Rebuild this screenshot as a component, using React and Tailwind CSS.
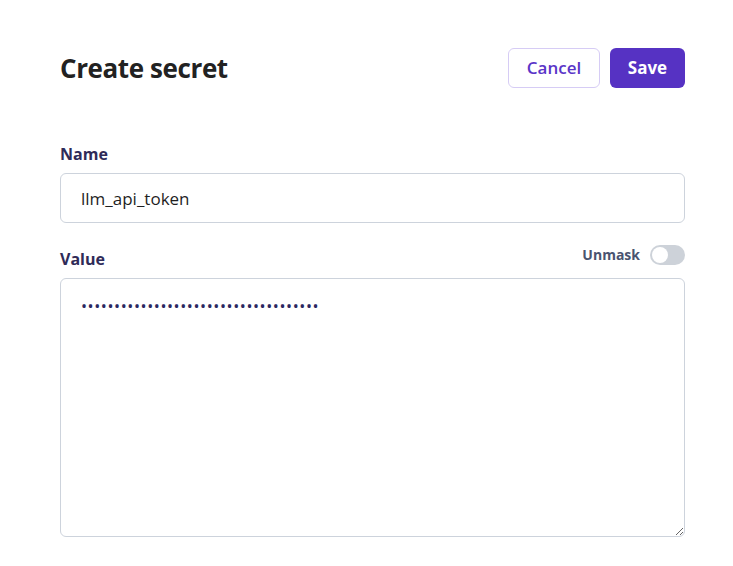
import {useState} from "react";

export default function App() {
    const [unmask, setUnmask] = useState(false);
    const secret = "•".repeat(36);

    return <div className="w-[733px] h-[566px] bg-white px-[60px] pr-[48px] pt-[48px]"
                style={{fontFamily: '"Open Sans", "Noto Sans", sans-serif'}}>
        <div className="flex items-center justify-between">
            <h1 className="text-[26px] font-bold text-[#222222] tracking-[-0.4px] mt-[1px]">Create secret</h1>
            <div className="flex gap-[10px]">
                <button className="h-[40px] w-[92px] rounded-md border border-[#d6ccf5] bg-white text-[#5a35c8] text-[17px] font-semibold">
                    Cancel
                </button>
                <button className="h-[40px] w-[75px] rounded-md bg-[#5632c3] text-white text-[17px] font-bold">
                    Save
                </button>
            </div>
        </div>

        <div className="mt-[55px]">
            <label className="block text-[16px] font-bold text-[#2f2b58] leading-[22px]">Name</label>
            <input className="mt-[8px] w-full h-[50px] rounded-md border border-[#cdd3dc] px-[20px] text-[17px] text-[#1f1f1f] outline-none"
                   defaultValue="llm_api_token"/>
        </div>

        <div className="mt-[17px]">
            <div className="flex h-[30px] items-end justify-between">
                <label className="text-[16px] font-bold text-[#2f2b58] leading-[22px]">Value</label>
                <div className="flex items-center gap-[10px] mb-[5px]">
                    <span className="text-[14px] font-bold text-[#4a5470]">Unmask</span>
                    <button onClick={() => setUnmask(!unmask)}
                            className="w-[35px] h-[20px] rounded-full bg-[#cdd2d9] flex items-center px-[2px]">
                        <span className="w-[16px] h-[16px] rounded-full bg-white"/>
                    </button>
                </div>
            </div>
            <textarea readOnly
                      className="mt-[8px] w-full h-[259px] rounded-md border border-[#cdd3dc] px-[20px] py-[15px] text-[16px] tracking-[0.6px] text-[#2a2760] outline-none"
                      value={unmask ? "sk-llm-token" : secret}/>
        </div>
    </div>
}
